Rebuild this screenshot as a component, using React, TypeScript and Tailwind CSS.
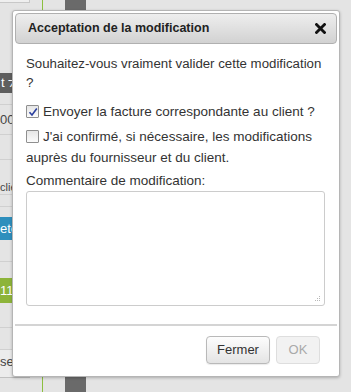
import React from "react";

function CloseIcon() {
  return (
    <svg width="11" height="11" viewBox="0 0 11 11" aria-hidden="true">
      <path d="M1.5 1.5 L9.5 9.5 M9.5 1.5 L1.5 9.5" stroke="#111" strokeWidth="2.8" strokeLinecap="square" />
    </svg>
  );
}

function Check({ checked }: { checked: boolean }) {
  return (
    <span className="inline-flex w-[13px] h-[13px] shrink-0 items-center justify-center border border-[#8f8f8f] bg-gradient-to-b from-[#e6e6e6] to-[#fbfbfb] rounded-[1px] mt-[3px]">
      {checked && (
        <svg width="10" height="10" viewBox="0 0 10 10" aria-hidden="true">
          <path d="M1.5 5.2 L4 8 L8.8 1.5" stroke="#2a3f9e" strokeWidth="1.6" fill="none" />
        </svg>
      )}
    </span>
  );
}

export default function App() {
  return (
    <div
      className="relative w-[351px] h-[392px] overflow-hidden bg-[#e4e4e4]"
      style={{ fontFamily: '"Liberation Sans", Arial, sans-serif' }}
    >
      {/* background page */}
      <div className="flex h-full">
        <div className="w-[30px] flex flex-col text-[13px] text-[#444]">
          <div className="h-[3px] bg-[#efefef] border-b border-r border-[#c8c8c8]" />
          <div className="h-[70px]" />
          <div className="h-[20px] bg-[#5f5f5f] text-white leading-[20px] pl-[1px] whitespace-nowrap overflow-hidden">t ⁊</div>
          <div className="h-[12px] border-b border-[#d0d0d0]" />
          <div className="h-[30px] leading-[30px] whitespace-nowrap overflow-hidden border-b border-[#d0d0d0]">00</div>
          <div className="h-[25px] border-b border-[#d0d0d0]" />
          <div className="h-[20px]" />
          <div className="h-[15px] leading-[15px] text-[11px] whitespace-nowrap overflow-hidden border-b border-[#d0d0d0]">clie</div>
          <div className="h-[12px] border-b border-[#d0d0d0]" />
          <div className="h-[10px]" />
          <div className="h-[23px] leading-[23px] bg-[#2e8fbd] text-white whitespace-nowrap overflow-hidden">ete</div>
          <div className="h-[22px] border-b border-[#d0d0d0]" />
          <div className="h-[16px]" />
          <div className="h-[25px] leading-[25px] bg-[#8db43a] text-white whitespace-nowrap overflow-hidden">11</div>
          <div className="h-[25px] border-b border-[#d0d0d0]" />
          <div className="h-[22px] border-b border-[#d0d0d0]" />
          <div className="h-[28px] leading-[24px] whitespace-nowrap overflow-hidden border-b border-[#c0c0c0] bg-[#ececec]">se</div>
        </div>
        <div className="w-[12px]" />
        <div className="w-[1px] bg-[#8cbf3f]" />
        <div className="w-[22px]" />
        <div className="w-[21px] bg-[#6a6a6a]" />
        <div className="flex-1" />
      </div>

      {/* dialog */}
      <div className="absolute left-[12px] top-[10px] w-[328px] h-[367px] bg-white border border-[#b5b5b5] rounded-[3px] p-[2px] shadow-[0_1px_3px_rgba(0,0,0,0.25)] flex flex-col">
        <div className="h-[31px] shrink-0 rounded-[4px] border border-[#b0b0b0] bg-gradient-to-b from-[#eeeeee] to-[#d2d2d2] flex items-center justify-between pl-[12px] pr-[10px]">
          <span className="text-[12.5px] font-bold text-[#222]">Acceptation de la modification</span>
          <CloseIcon />
        </div>
        <div className="px-[11px] pt-[10px] text-[13.5px] leading-[19px] text-[#333] flex flex-col">
          <p>
            <span className="whitespace-nowrap text-[13.25px]">Souhaitez-vous vraiment valider cette modification</span>
            <br />?
          </p>
          <label className="flex gap-[4px] mt-[10px]">
            <Check checked={true} />
            <span>Envoyer la facture correspondante au client ?</span>
          </label>
          <label className="mt-[6px]">
            <span className="inline-block align-[-2px] mr-[4px]"><Check checked={false} /></span>
            J'ai confirmé, si nécessaire, les modifications auprès du fournisseur et du client.
          </label>
          <span className="mt-[4px]">Commentaire de modification:</span>
          <div className="mt-[1px] h-[115px] w-[299px] border border-[#cccccc] rounded-[3px] relative">
            <svg className="absolute right-[3px] bottom-[3px]" width="7" height="7" viewBox="0 0 7 7" aria-hidden="true">
              <g fill="#b8b8b8">
                <rect x="5" y="1" width="1" height="1" />
                <rect x="3" y="3" width="1" height="1" />
                <rect x="5" y="3" width="1" height="1" />
                <rect x="1" y="5" width="1" height="1" />
                <rect x="3" y="5" width="1" height="1" />
                <rect x="5" y="5" width="1" height="1" />
              </g>
            </svg>
          </div>
        </div>
        <div className="mt-[18px] h-[2px] bg-[#d4d4d4]" />
        <div className="flex justify-end gap-[6px] pr-[17px] pt-[10px]">
          <button className="h-[28px] w-[64px] rounded-[4px] border border-[#b9b9b9] bg-gradient-to-b from-[#fdfdfd] to-[#e4e4e4] text-[13px] text-[#333] shadow-[0_1px_1px_rgba(0,0,0,0.08)]">
            Fermer
          </button>
          <button className="h-[28px] w-[44px] rounded-[4px] border border-[#dedede] bg-[#f2f2f2] text-[13px] text-[#a9a9a9]">
            OK
          </button>
        </div>
      </div>
    </div>
  );
}
